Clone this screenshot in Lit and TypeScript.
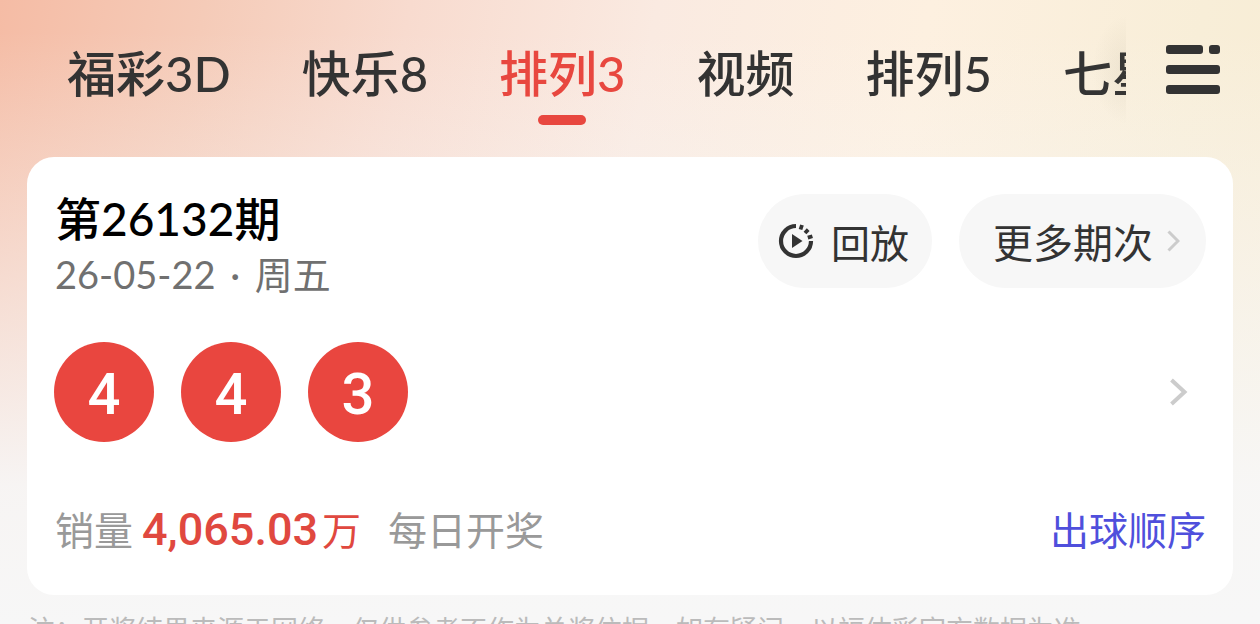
import { LitElement, html, css } from "lit";
import { customElement, state } from "lit/decorators.js";

@customElement("app-root")
export class AppRoot extends LitElement {
  static styles = css`
    :host {
      display: block;
      height: 100vh;
      box-sizing: border-box;
      overflow: hidden;
      color: #333;
      font-family: Lato, "Noto Sans CJK SC", sans-serif;
      background:
        linear-gradient(to bottom, rgba(247, 247, 247, 0) 5%, rgba(247, 247, 247, 0.6) 52%, rgba(247, 247, 247, 0.95) 78%, rgba(247, 247, 247, 1) 100%),
        linear-gradient(100deg, #f5bca5 0%, #f5cbb8 15%, #f8dbcf 30%, #faeae1 48%, #fdf0e0 68%, #f8eed8 88%, #f8ecd4 100%);
    }
    * { box-sizing: border-box; }
    button { border: 0; padding: 0; margin: 0; background: none; color: inherit; font: inherit; cursor: pointer; }
    .head { display: flex; align-items: center; height: 157px; padding-bottom: 18px; }
    .tabs { position: relative; display: flex; flex: 1; min-width: 0; gap: 71px; padding-left: 67px; overflow: hidden; }
    .tabs::after {
      content: ""; position: absolute; inset: 0 0 0 auto; width: 34px; pointer-events: none;
      background: radial-gradient(ellipse at right, rgba(120, 110, 80, 0.09), rgba(120, 110, 80, 0) 70%);
    }
    .tab {
      flex: none; display: flex; flex-direction: column; align-items: center; gap: 12px;
      font-size: 49px; line-height: 60px; font-weight: 500; white-space: nowrap; padding-top: 28px;
    }
    .tab::after { content: ""; width: 48px; height: 10px; border-radius: 5px; }
    .tab.on { color: #e8473f; }
    .tab.on::after { background: #e8473f; }
    .menu { flex: none; width: 134px; display: flex; justify-content: center; }
    svg { display: block; }
    .card { margin: 0 27px; padding: 37px 27px 36px 28px; background: #fff; border-radius: 27px; }
    .top { display: flex; justify-content: space-between; align-items: flex-start; }
    h1 { margin: 0; font-size: 46px; line-height: 50px; font-weight: 500; color: #000; }
    .date { margin: 0; font-size: 38px; line-height: 60px; color: #707070; }
    .dot { margin: 0 5px; }
    .actions { display: flex; gap: 27px; }
    .pill {
      display: flex; align-items: center; height: 94px; border-radius: 47px; padding: 0 23px 0 20px;
      background: #f7f7f7; font-size: 39px; gap: 17px;
    }
    .pill.more { padding: 0 26px 0 34px; gap: 14px; font-size: 40px; }
    .row { display: flex; align-items: center; justify-content: space-between; margin-top: 38px; padding-right: 18px; }
    .balls { display: flex; gap: 27px; margin: 0 0 0 -1px; padding: 0; list-style: none; }
    .ball {
      display: flex; align-items: center; justify-content: center; width: 100px; height: 100px; border-radius: 50%;
      background: #e9463f; color: #fff; font: 500 58px/100px Roboto, sans-serif; padding-top: 3px;
    }
    .foot { display: flex; align-items: center; justify-content: space-between; margin-top: 59px; font-size: 39px; line-height: 58px; color: #999; }
    .sales { display: flex; align-items: baseline; }
    .amount { margin: 0 4px 0 9px; color: #e0483f; font: 500 45px/56px Roboto, sans-serif; }
    .unit { color: #e0483f; margin-right: 27px; }
    a { color: #4f4fdc; text-decoration: none; }
    .note { margin: 15px 28px 0; font-size: 27px; line-height: 40px; color: #bbb; white-space: nowrap; }
  `;

  @state() private active = 2;
  private tabs = ["福彩3D", "快乐8", "排列3", "视频", "排列5", "七星彩"];
  private balls = [4, 4, 3];

  render() {
    return html`
      <header class="head">
        <nav class="tabs" aria-label="彩种">
          ${this.tabs.map((t, i) => html`<button class="tab ${i === this.active ? "on" : ""}" @click=${() => (this.active = i)}>${t}</button>`)}
        </nav>
        <button class="menu" aria-label="全部">
          <svg width="54" height="50" viewBox="0 0 54 50" fill="#333">
            <rect width="37" height="9" rx="3" /><rect x="43" width="11" height="9" rx="3" />
            <rect y="20" width="54" height="9" rx="3" /><rect y="40" width="54" height="9" rx="3" />
          </svg>
        </button>
      </header>
      <main class="card">
        <div class="top">
          <div>
            <h1>第26132期</h1>
            <p class="date">26-05-22 <span class="dot">·</span> 周五</p>
          </div>
          <div class="actions">
            <button class="pill">
              <svg width="36" height="36" viewBox="0 0 36 36" fill="none" stroke="#333" stroke-width="4.2">
                <path d="M18 3A15 15 0 1 0 33 18" />
                <path d="M22.500 6.500L24 2M27 10L30.200 6.600M29.800 14.600L34.400 13.200" stroke-width="3.8" />
                <path d="M14 11V25L24.500 18Z" fill="#333" stroke="none" />
              </svg>
              <span>回放</span>
            </button>
            <button class="pill more">
              <span>更多期次</span>
              <svg width="13" height="22" viewBox="0 0 13 22" fill="none" stroke="#ccc" stroke-width="3"><path d="M1.5 1.5L11 11L1.5 20.5" /></svg>
            </button>
          </div>
        </div>
        <div class="row">
          <ul class="balls">${this.balls.map((b) => html`<li class="ball">${b}</li>`)}</ul>
          <button aria-label="详情">
            <svg width="19" height="28" viewBox="0 0 19 28" fill="none" stroke="#ccc" stroke-width="4"><path d="M2.500 2L15.500 14L2.500 26" /></svg>
          </button>
        </div>
        <div class="foot">
          <div class="sales"><span>销量</span><span class="amount">4,065.03</span><span class="unit">万</span><span>每日开奖</span></div>
          <a href="#order">出球顺序</a>
        </div>
      </main>
      <p class="note">注：开奖结果来源于网络，仅供参考不作为兑奖依据，如有疑问，以福体彩官方数据为准</p>
    `;
  }
}
